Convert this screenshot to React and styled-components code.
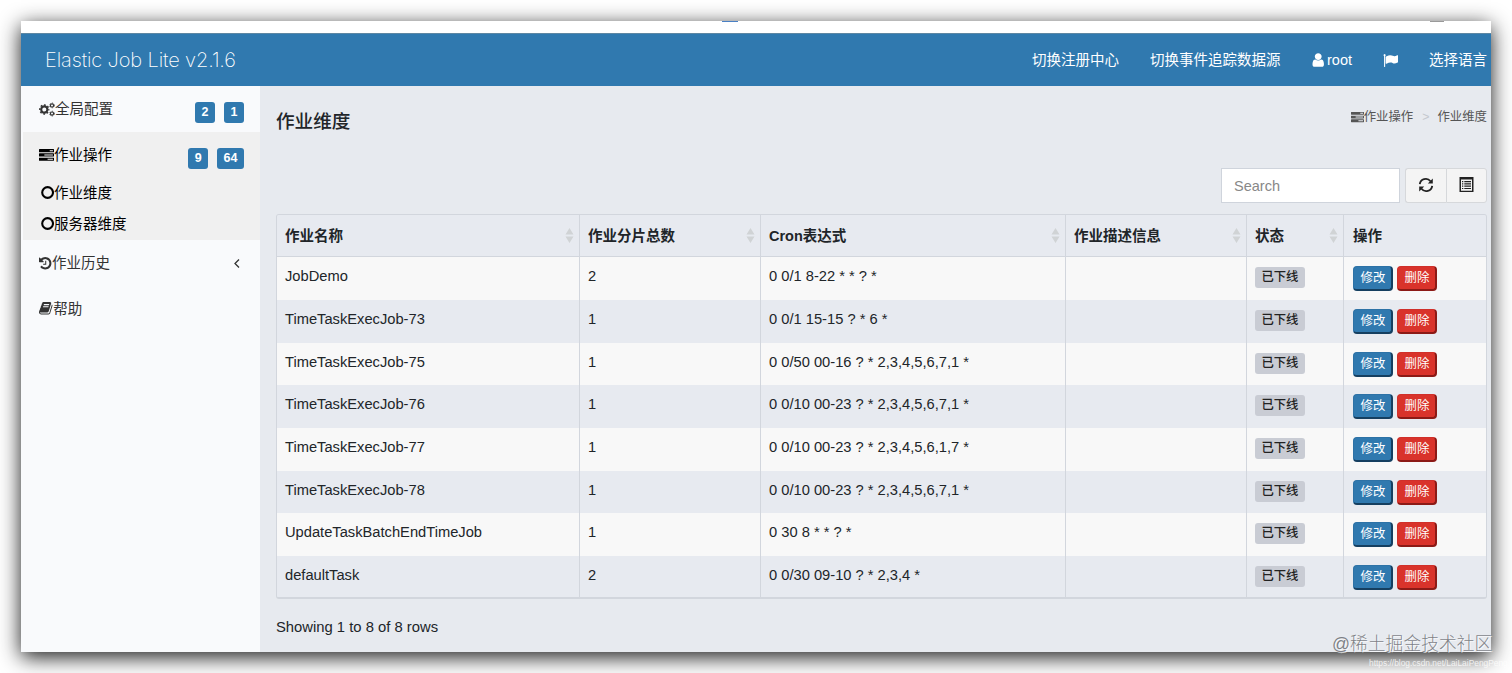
import { styled, createGlobalStyle } from 'styled-components';

const GlobalStyle = createGlobalStyle`
  * {
    box-sizing: border-box;
  }

  body {
    margin: 0;
    background: #fff;
    color: #212529;
    font-family: 'Liberation Sans', 'Noto Sans CJK SC', sans-serif;
    font-size: 14.5px;
    line-height: 20px;
    overflow: hidden;
  }
`;

const Page = styled.div`
  position: relative;
  height: 673px;
  padding: 21px;
  overflow: hidden;
`;

const Window = styled.div`
  display: flex;
  flex-direction: column;
  width: 1470px;
  height: 631px;
  background: #e7eaef;
  box-shadow: 0 5px 20px rgba(0, 0, 0, 0.9);
`;

const TopStrip = styled.div`
  display: flex;
  height: 12px;
  background: #fff;
`;

const StripMark = styled.span`
  width: ${(props) => props.$width}px;
  height: 1px;
  margin-left: ${(props) => props.$gap}px;
  background: ${(props) => props.$color};
`;

const Header = styled.header`
  display: flex;
  align-items: center;
  justify-content: space-between;
  height: 53px;
  padding: 0 4px 0 24px;
  border-top: 1px solid #5d87a3;
  background: #3079af;
  color: #fff;
`;

const Brand = styled.div`
  font-family: Inter, sans-serif;
  font-size: 20px;
  font-weight: 200;
  letter-spacing: -0.12px;
  white-space: nowrap;
`;

const Nav = styled.nav`
  display: flex;
  align-items: center;
  gap: 31px;
  white-space: nowrap;
`;

const NavItem = styled.span`
  display: flex;
  align-items: center;
  gap: 3px;
`;

const Body = styled.div`
  display: flex;
  flex: 1;
`;

const Sidebar = styled.aside`
  width: 239px;
  padding-left: 2px;
  background: #f9fafc;
`;

const MenuItem = styled.div`
  display: flex;
  align-items: flex-start;
  height: ${(props) => props.$height || 46}px;
  padding: 13px 16px 0 16px;
  color: ${(props) => (props.$active ? '#000' : '#333')};
`;

const MenuLabel = styled.span`
  display: flex;
  flex: 1;
  align-items: center;
`;

const Badges = styled.span`
  display: flex;
  gap: 9px;
  padding-top: 3px;
`;

const Badge = styled.span`
  height: 21px;
  padding: 0 6.5px;
  border-radius: 3px;
  background: #3079af;
  color: #fff;
  font-size: 12.5px;
  font-weight: bold;
  line-height: 21px;
`;

const ActiveGroup = styled.div`
  height: 108px;
  background: #f0f0f0;
`;

const SubItem = styled.div`
  display: flex;
  align-items: center;
  height: 31px;
  padding-left: 18px;
  color: #000;
`;

const Content = styled.main`
  flex: 1;
  padding: 0 4px 0 16px;
`;

const ContentHeader = styled.div`
  display: flex;
  justify-content: space-between;
  height: 82px;
  padding-top: 21px;
`;

const Title = styled.h1`
  margin: 0;
  padding-top: 5px;
  font-size: 18.6px;
  font-weight: 500;
  line-height: 20px;
`;

const Breadcrumb = styled.div`
  display: flex;
  align-items: center;
  height: 20px;
  color: #555;
  font-size: 12.4px;
`;

const Separator = styled.span`
  margin: 0 8px 0 9px;
  color: #c4c8ce;
`;

const Toolbar = styled.div`
  display: flex;
  justify-content: flex-end;
  height: 46px;
`;

const SearchInput = styled.input`
  width: 179px;
  height: 35px;
  margin-right: 5px;
  padding: 0 12px;
  border: 1px solid #cfd4dc;
  background: #fff;
  font: inherit;

  &::placeholder {
    color: #888;
  }
`;

const ToolButton = styled.button`
  display: flex;
  align-items: center;
  justify-content: center;
  width: 41px;
  height: 35px;
  padding: 0 0 2px;
  border: 1px solid #d6d8db;
  border-right-width: ${(props) => (props.$last ? 1 : 0)}px;
  border-radius: ${(props) => (props.$last ? '0 3px 3px 0' : '3px 0 0 3px')};
  background: #f4f4f4;
  color: #222;
`;

const Table = styled.div`
  height: 385px;
  border: 1px solid #d2d6dd;
  border-bottom-width: 2px;
  border-radius: 3px;
  font-size: 14.7px;
  overflow: hidden;
`;

const Row = styled.div`
  display: grid;
  grid-template-columns: 303px 181px 305px 181px 97px 1fr;
  height: ${(props) => (props.$head ? 42.3 : 42.66)}px;
  border-bottom: ${(props) => (props.$head ? '1px solid #d2d6dd' : '0')};
  background: ${(props) => (props.$striped ? '#f8f8f8' : '#e7eaf0')};
  font-weight: ${(props) => (props.$head ? 'bold' : 'normal')};
`;

const Cell = styled.div`
  display: flex;
  align-items: flex-start;
  gap: 4px;
  padding: 9px 9px 0 8px;
  border-right: 1px solid #d2d6dd;
  white-space: nowrap;

  &:last-child {
    padding-left: 9px;
    border-right: 0;
  }
`;

const HeadCell = styled(Cell)`
  align-items: center;
  justify-content: space-between;
  padding: 0 5px 0 8px;
  font-size: 14.5px;
`;

const Status = styled.span`
  height: 21px;
  margin-top: 1px;
  padding: 0 6.5px;
  border-radius: 3px;
  background: #c9ccd4;
  color: #222;
  font-size: 12.3px;
  font-weight: 500;
  line-height: 20px;
`;

const ActionButton = styled.button`
  width: 40px;
  height: 25px;
  padding: 0 0 0 1px;
  border-style: solid;
  border-width: 1px 2px 2px 1px;
  border-color: ${(props) => (props.$danger ? '#d0302a #8c1a16 #8c1a16 #d0302a' : '#2d72a6 #153f60 #153f60 #2d72a6')};
  border-radius: 4px;
  background: ${(props) => (props.$danger ? '#d9332b' : '#3079af')};
  color: #fff;
  font: inherit;
  font-size: 12.4px;
  line-height: 22px;
`;

const Footer = styled.div`
  padding-top: 18px;
  font-size: 14.8px;
`;

const Watermark = styled.div`
  position: absolute;
  top: 632px;
  left: 1332px;
  color: rgba(90, 92, 98, 0.75);
  font-size: 17.8px;
  font-weight: 300;
  line-height: 24px;
  text-shadow: 1px 1px 0 rgba(255, 255, 255, 0.7);
  white-space: nowrap;
`;

const SourceUrl = styled.div`
  position: absolute;
  top: 656px;
  left: 1369px;
  color: rgba(255, 255, 255, 0.8);
  font-size: 8.4px;
  line-height: 14px;
  white-space: nowrap;
`;

const paths = {
  tasks: 'M1024 1408h640v-128h-640v128zm-384-512h1024v-128h-1024v128zm640-512h384v-128h-384v128zm512 832v256q0 26-19 45t-45 19h-1664q-26 0-45-19t-19-45v-256q0-26 19-45t45-19h1664q26 0 45 19t19 45zm0-512v256q0 26-19 45t-45 19h-1664q-26 0-45-19t-19-45v-256q0-26 19-45t45-19h1664q26 0 45 19t19 45zm0-512v256q0 26-19 45t-45 19h-1664q-26 0-45-19t-19-45v-256q0-26 19-45t45-19h1664q26 0 45 19t19 45z',
  history: 'M1664 896q0 156-61 298t-164 245-245 164-298 61q-172 0-327-72.5t-264-204.5q-7-10-6.5-22.5t8.5-20.5l137-138q10-9 25-9 16 2 23 12 73 95 179 147t225 52q104 0 198.5-40.5t163.5-109.5 109.5-163.5 40.5-198.5-40.5-198.5-109.5-163.5-163.5-109.5-198.5-40.5q-98 0-188 35.5t-160 101.5l137 138q31 30 14 69-17 40-59 40h-448q-26 0-45-19t-19-45v-448q0-42 40-59 39-17 69 14l130 129q107-101 244.5-156.5t284.5-55.5q156 0 298 61t245 164 164 245 61 298zm-640-288v448q0 14-9 23t-23 9h-320q-14 0-23-9t-9-23v-64q0-14 9-23t23-9h224v-352q0-14 9-23t23-9h64q14 0 23 9t9 23z',
  book: 'M1703 478q40 57 18 129l-275 906q-19 64-76.5 107.5t-122.5 43.5h-923q-77 0-148.5-53.5t-99.5-131.5q-24-67-2-127 0-4 3-27t4-37q1-8-3-21.5t-3-19.5q2-11 8-21t16.5-23.5 16.5-23.5q23-38 45-91.5t30-91.5q3-10 .5-30t-.5-28q3-11 17-28t17-23q21-36 42-92t25-90q1-9-2.5-32t.5-28q4-13 22-30.5t22-22.5q19-26 42.5-84.5t27.5-96.5q1-8-3-25.5t-2-26.5q2-8 9-18t18-23 17-21q8-12 16.5-30.5t15-35 16-36 19.5-32 26.5-23.5 36-11.5 47.5 5.5l-1 3q38-9 51-9h761q74 0 114 56t18 130l-274 906q-36 119-71.5 153.5t-128.5 34.5h-869q-27 0-38 15-11 16-1 43 24 70 144 70h923q29 0 56-15.5t35-41.5l300-987q7-22 5-57 38 15 59 43zm-1064 2q-4 13 2 22.5t20 9.5h608q13 0 25.5-9.5t16.5-22.5l21-64q4-13-2-22.5t-20-9.5h-608q-13 0-25.5 9.5t-16.5 22.5zm-83 256q-4 13 2 22.5t20 9.5h608q13 0 25.5-9.5t16.5-22.5l21-64q4-13-2-22.5t-20-9.5h-608q-13 0-25.5 9.5t-16.5 22.5z',
  user: 'M1536 1399q0 109-62.5 187t-150.5 78h-854q-88 0-150.5-78t-62.5-187q0-85 8.5-160.5t31.5-152 58.5-131 94-89 134.5-34.5q131 128 313 128t313-128q76 0 134.5 34.5t94 89 58.5 131 31.5 152 8.5 160.5zm-256-887q0 159-112.5 271.5t-271.5 112.5-271.5-112.5-112.5-271.5 112.5-271.5 271.5-112.5 271.5 112.5 112.5 271.5z',
  flag: 'M320 256q0 72-64 110v1266q0 13-9.5 22.5t-22.5 9.5h-64q-13 0-22.5-9.5t-9.5-22.5v-1266q-64-38-64-110 0-53 37.5-90.5t90.5-37.5 90.5 37.5 37.5 90.5zm1472 64v763q0 25-12.5 38.5t-39.5 27.5q-215 116-369 116-61 0-123.5-22t-108.5-48-115.5-48-142.5-22q-192 0-464 146-17 9-33 9-26 0-45-19t-19-45v-742q0-32 31-55 21-14 79-43 236-120 421-120 107 0 200 29t219 88q38 19 88 19 54 0 117.5-21t110-47 88-47 54.5-21q26 0 45 19t19 45z',
};

// left and width trim the empty side bearings of the 1792 unit glyph box
function Icon({ name, size = 14.5, left = 0, width = 1792 }) {
  return (
    <svg width={(size * width) / 1792} height={size} viewBox={`${left} 0 ${width} 1792`} fill="currentColor">
      <path d={paths[name]} />
    </svg>
  );
}

// each gear is a ring with a dashed ring of teeth round it
function CogsIcon() {
  return (
    <svg width="16" height="15" viewBox="0 0 16 15" fill="none" stroke="currentColor">
      <circle cx="5.3" cy="7.5" r="3.1" strokeWidth="2.1" />
      <circle cx="5.3" cy="7.5" r="4.5" strokeWidth="1.4" strokeDasharray="1.8 1.734" strokeDashoffset="0.9" />
      <circle cx="13" cy="3.4" r="1.6" strokeWidth="1.2" />
      <circle cx="13" cy="3.4" r="2.4" strokeWidth="0.8" strokeDasharray="1.2 1.313" />
      <circle cx="13" cy="11.6" r="1.6" strokeWidth="1.2" />
      <circle cx="13" cy="11.6" r="2.4" strokeWidth="0.8" strokeDasharray="1.2 1.313" />
    </svg>
  );
}

function CircleIcon() {
  return (
    <svg width="13" height="14" viewBox="0 0 13 14" fill="none" stroke="currentColor" strokeWidth="2.1">
      <circle cx="6.6" cy="6.5" r="5.4" />
    </svg>
  );
}

function AngleLeft() {
  return (
    <svg width="11" height="20" viewBox="0 0 11 20" fill="none" stroke="currentColor" strokeWidth="1.3">
      <path d="M6 6.5 L2 10.5 L6 14.5" />
    </svg>
  );
}

function SortIcon() {
  return (
    <svg width="9" height="15" viewBox="0 0 9 15" fill="#d0d3d5">
      <path d="M4.5 0 L8.5 6.5 H0.5 Z M0.5 8.5 H8.5 L4.5 15 Z" />
    </svg>
  );
}

function RefreshIcon() {
  return (
    <svg width="16" height="16" viewBox="0 0 16 16" fill="none" stroke="currentColor" strokeWidth="1.8">
      <path d="M1.8 7.2 A6 6 0 0 1 12.5 4.2 M14.2 8.8 A6 6 0 0 1 3.5 11.8" />
      <path d="M14.8 1.6 V6.6 H9.8 Z M1.2 14.4 V9.4 H6.2 Z" fill="currentColor" stroke="none" />
    </svg>
  );
}

function ListIcon() {
  return (
    <svg width="15" height="15" viewBox="0 0 15 15" fill="currentColor">
      <path fillRule="evenodd" d="M0.5 0 H14.5 V15 H0.5 Z M2 2.5 V13.8 H13 V2.5 Z" />
      <path d="M3 4 h1.3 v1.2 h-1.3 z M5.3 4 h6.7 v1.2 h-6.7 z M3 6.3 h1.3 v1.2 h-1.3 z M5.3 6.3 h6.7 v1.2 h-6.7 z M3 8.6 h1.3 v1.2 h-1.3 z M5.3 8.6 h6.7 v1.2 h-6.7 z M3 10.9 h1.3 v1.2 h-1.3 z M5.3 10.9 h6.7 v1.2 h-6.7 z" />
    </svg>
  );
}

const columns = ['作业名称', '作业分片总数', 'Cron表达式', '作业描述信息', '状态', '操作'];

const jobs = [
  { name: 'JobDemo', shards: 2, cron: '0 0/1 8-22 * * ? *' },
  { name: 'TimeTaskExecJob-73', shards: 1, cron: '0 0/1 15-15 ? * 6 *' },
  { name: 'TimeTaskExecJob-75', shards: 1, cron: '0 0/50 00-16 ? * 2,3,4,5,6,7,1 *' },
  { name: 'TimeTaskExecJob-76', shards: 1, cron: '0 0/10 00-23 ? * 2,3,4,5,6,7,1 *' },
  { name: 'TimeTaskExecJob-77', shards: 1, cron: '0 0/10 00-23 ? * 2,3,4,5,6,1,7 *' },
  { name: 'TimeTaskExecJob-78', shards: 1, cron: '0 0/10 00-23 ? * 2,3,4,5,6,7,1 *' },
  { name: 'UpdateTaskBatchEndTimeJob', shards: 1, cron: '0 30 8 * * ? *' },
  { name: 'defaultTask', shards: 2, cron: '0 0/30 09-10 ? * 2,3,4 *' },
];

function JobTable() {
  return (
    <Table>
      <Row $head>
        {columns.map((column, index) => (
          <HeadCell key={column}>
            {column}
            {index < columns.length - 1 && <SortIcon />}
          </HeadCell>
        ))}
      </Row>
      {jobs.map((job, index) => (
        <Row key={job.name} $striped={index % 2 === 0}>
          <Cell>{job.name}</Cell>
          <Cell>{job.shards}</Cell>
          <Cell>{job.cron}</Cell>
          <Cell />
          <Cell>
            <Status>已下线</Status>
          </Cell>
          <Cell>
            <ActionButton>修改</ActionButton>
            <ActionButton $danger>删除</ActionButton>
          </Cell>
        </Row>
      ))}
    </Table>
  );
}

function SideMenu() {
  return (
    <Sidebar>
      <MenuItem>
        <MenuLabel><CogsIcon />全局配置</MenuLabel>
        <Badges><Badge>2</Badge><Badge>1</Badge></Badges>
      </MenuItem>
      <ActiveGroup>
        <MenuItem $active $height={45}>
          <MenuLabel><Icon name="tasks" size={15} />作业操作</MenuLabel>
          <Badges><Badge>9</Badge><Badge>64</Badge></Badges>
        </MenuItem>
        <SubItem><CircleIcon />作业维度</SubItem>
        <SubItem><CircleIcon />服务器维度</SubItem>
      </ActiveGroup>
      <MenuItem $height={45.5}>
        <MenuLabel><Icon name="history" left={128} width={1600} />作业历史</MenuLabel>
        <AngleLeft />
      </MenuItem>
      <MenuItem>
        <MenuLabel><Icon name="book" left={64} width={1750} />帮助</MenuLabel>
      </MenuItem>
    </Sidebar>
  );
}

export default function App() {
  return (
    <Page>
      <GlobalStyle />
      <Window>
        <TopStrip>
          <StripMark $gap={701} $width={16} $color="#4a80c4" />
          <StripMark $gap={692} $width={14} $color="#999" />
        </TopStrip>
        <Header>
          <Brand>Elastic Job Lite v2.1.6</Brand>
          <Nav>
            <NavItem>切换注册中心</NavItem>
            <NavItem>切换事件追踪数据源</NavItem>
            <NavItem><Icon name="user" left={200} width={1400} size={16} /> root</NavItem>
            <NavItem><Icon name="flag" size={15} /></NavItem>
            <NavItem>选择语言</NavItem>
          </Nav>
        </Header>
        <Body>
          <SideMenu />
          <Content>
            <ContentHeader>
              <Title>作业维度</Title>
              <Breadcrumb>
                <Icon name="tasks" size={13} />作业操作
                <Separator>&gt;</Separator>
                作业维度
              </Breadcrumb>
            </ContentHeader>
            <Toolbar>
              <SearchInput placeholder="Search" />
              <ToolButton><RefreshIcon /></ToolButton>
              <ToolButton $last><ListIcon /></ToolButton>
            </Toolbar>
            <JobTable />
            <Footer>Showing 1 to 8 of 8 rows</Footer>
          </Content>
        </Body>
      </Window>
      <Watermark>@稀土掘金技术社区</Watermark>
      <SourceUrl>https://blog.csdn.net/LaiLaiPengPeng</SourceUrl>
    </Page>
  );
}
